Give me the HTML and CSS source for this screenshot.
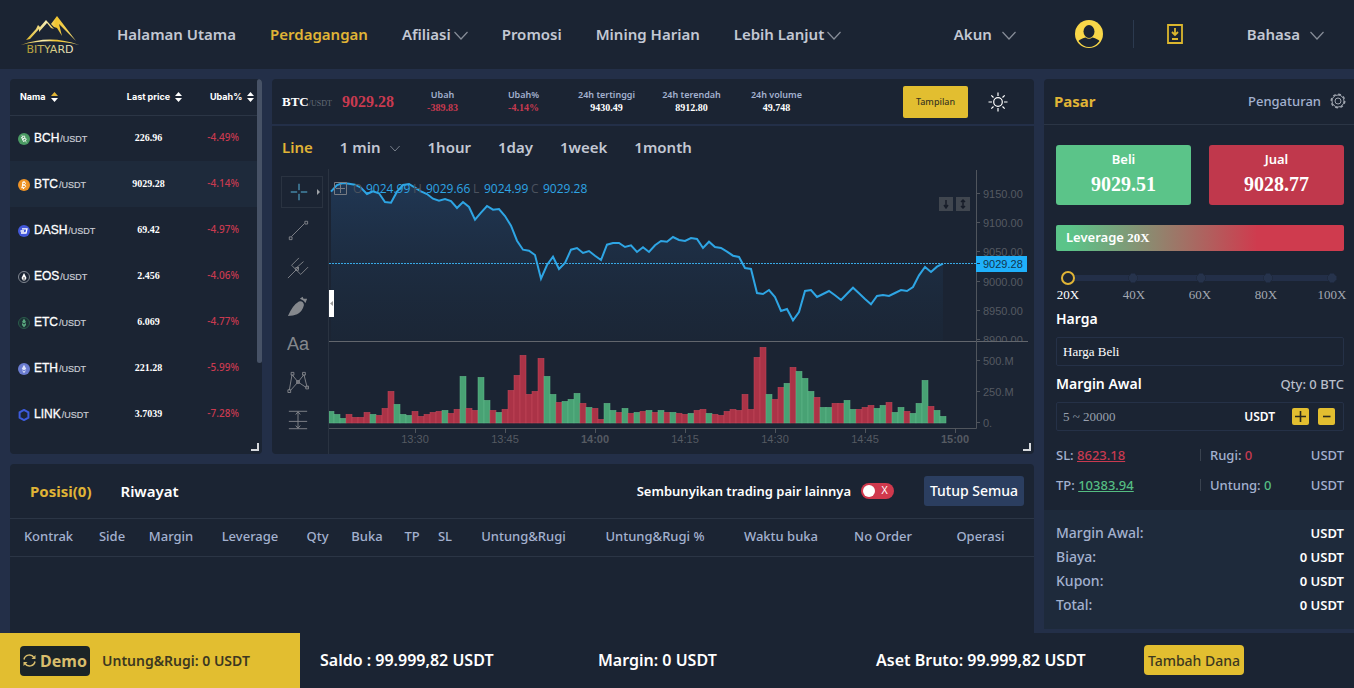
FILE: index.html
```html
<!DOCTYPE html>
<html lang="id">
<head>
<meta charset="utf-8">
<title>Bityard</title>
<link rel="stylesheet" href="styles.css">
</head>
<body>
<header class="topbar">
  <a class="logo" href="#" aria-label="Bityard">
    <svg width="60" height="40" viewBox="0 0 60 40">
      <defs>
        <linearGradient id="gold" x1="0" x2="1" y1="0" y2="0"><stop offset="0" stop-color="#e0b92a"/><stop offset=".4" stop-color="#f7ecb0"/><stop offset=".6" stop-color="#f0c42e"/><stop offset="1" stop-color="#f3dc7a"/></linearGradient>
        <linearGradient id="word" x1="0" x2="1" y1="0" y2="0"><stop offset="0" stop-color="#b39a2e"/><stop offset=".6" stop-color="#d9cf8a"/><stop offset="1" stop-color="#f3ecd0"/></linearGradient>
      </defs>
      <path fill="url(#gold)" d="M5 25 15 14 17 10 19 12 25 5 33 14 30 13 26 8 18 17 18 14 9 24ZM30 9 36 1 55 26 38 9 41 21 36 13 33 12Z"/>
      <path fill="url(#gold)" d="M0 30Q29 19 58 30 29 22.500 0 30Z"/>
      <text class="logo-word" x="29" y="38" text-anchor="middle" fill="url(#word)">BITYARD</text>
    </svg>
  </a>
  <nav class="nav">
    <a href="#">Halaman Utama</a>
    <a href="#" class="is-active">Perdagangan</a>
    <a href="#">Afiliasi<svg class="chev" viewBox="0 0 14 9"><path d="M.5 1 7 8 13.500 1"/></svg></a>
    <a href="#">Promosi</a>
    <a href="#">Mining Harian</a>
    <a href="#">Lebih Lanjut<svg class="chev" viewBox="0 0 14 9"><path d="M.5 1 7 8 13.500 1"/></svg></a>
  </nav>
  <div class="account">
    <a href="#" class="menu-link">Akun<svg class="chev" viewBox="0 0 14 9"><path d="M.5 1 7 8 13.500 1"/></svg></a>
    <a href="#" class="avatar" aria-label="Profil">
      <svg width="28" height="28" viewBox="0 0 28 28"><circle cx="14" cy="14" r="14" fill="#f9d749"/><ellipse cx="14" cy="11.500" rx="5.500" ry="6.500" fill="#1b2433"/><path fill="#1b2433" d="M3.500 21Q5 19 10.500 17.500 14 20 17.500 17.500 23 19 24.500 21 20 27 14 27 8 27 3.500 21Z"/></svg>
    </a>
    <a href="#" class="download" aria-label="Unduh">
      <svg width="16" height="20" viewBox="0 0 16 20" fill="none" stroke="#dcb72e" stroke-width="1.800"><path d="M1 1H15V19H1Z"/><path d="M8 4V10M5 8 8 11 11 8M5 15H11"/></svg>
    </a>
    <a href="#" class="menu-link">Bahasa<svg class="chev" viewBox="0 0 14 9"><path d="M.5 1 7 8 13.500 1"/></svg></a>
  </div>
</header>

<main class="main">
  <div class="left">
    <div class="upper">
      <section class="panel market">
        <table class="market-table">
          <thead><tr>
            <th class="c-name">Nama<svg class="sort" viewBox="0 0 7 10"><path class="on" d="M0 4H7L3.500 0Z"/><path d="M0 6H7L3.500 10Z"/></svg></th>
            <th class="c-price">Last price<svg class="sort" viewBox="0 0 7 10"><path d="M0 4H7L3.500 0ZM0 6H7L3.500 10Z"/></svg></th>
            <th class="c-change">Ubah%<svg class="sort" viewBox="0 0 7 10"><path d="M0 4H7L3.500 0ZM0 6H7L3.500 10Z"/></svg></th>
          </tr></thead>
          <tbody>
            <tr><td><svg class="coin" viewBox="0 0 12 12"><circle cx="6" cy="6" r="6" fill="#4a9a63"/><path d="M3.500 4 5.500 8.500M4 4.500Q7 1.500 6.800 4.500L5 6.200Q8.500 4 8 7L5.500 8.500M4 2.500l.5 1.200M7.800 8.300l.4 1" stroke="#fff" fill="none"/></svg><b>BCH</b><span>/USDT</span></td><td>226.96</td><td>-4.49%</td></tr>
            <tr class="is-selected"><td><svg class="coin" viewBox="0 0 12 12"><circle cx="6" cy="6" r="6" fill="#ee9326"/><path d="M5 3 4 9M4.500 3.200Q8 2.800 7.500 4.500T4.500 6Q8.200 5.800 7.700 7.500T3.500 8.800M6 2v1M5.500 9v1" stroke="#fff" fill="none"/></svg><b>BTC</b><span>/USDT</span></td><td>9029.28</td><td>-4.14%</td></tr>
            <tr><td><svg class="coin" viewBox="0 0 12 12"><circle cx="6" cy="6" r="6" fill="#4257d9"/><path d="M4 3.800H9L8 8H3M2.500 6H6" stroke="#fff" stroke-width="1.300" fill="none"/></svg><b>DASH</b><span>/USDT</span></td><td>69.42</td><td>-4.97%</td></tr>
            <tr><td><svg class="coin" viewBox="0 0 12 12"><circle cx="6" cy="6" r="5.500" fill="#1b2433" stroke="#9a9fa8" stroke-width=".8"/><path d="M6 2 3.500 7 5 9.500H7L8.500 7Z" fill="#fff"/><path d="M6 6V9.500" stroke="#444"/></svg><b>EOS</b><span>/USDT</span></td><td>2.456</td><td>-4.06%</td></tr>
            <tr><td><svg class="coin" viewBox="0 0 12 12"><circle cx="6" cy="6" r="5.500" fill="#1c3035" stroke="#2e6a50" stroke-width=".8"/><path d="M6 1.500 8 5 6 6.500 4 5ZM4 6 6 7.500 8 6V8L6 10.500 4 8Z" fill="#58a77e"/></svg><b>ETC</b><span>/USDT</span></td><td>6.069</td><td>-4.77%</td></tr>
            <tr><td><svg class="coin" viewBox="0 0 12 12"><circle cx="6" cy="6" r="6" fill="#6a7cd0"/><path d="M6 1.800 8.300 6 6 7.300 3.700 6ZM3.800 7 6 8.400 8.200 7 6 10.300Z" fill="#dfe4fa"/></svg><b>ETH</b><span>/USDT</span></td><td>221.28</td><td>-5.99%</td></tr>
            <tr><td><svg class="coin" viewBox="0 0 12 12"><path d="M6 .9 10.400 3.400V8.600L6 11.100 1.600 8.600V3.400Z" fill="none" stroke="#3d5bdc" stroke-width="2"/></svg><b>LINK</b><span>/USDT</span></td><td>3.7039</td><td>-7.28%</td></tr>
            <tr><td><svg class="coin" viewBox="0 0 12 12"><circle cx="6" cy="6" r="6" fill="#9a9fa8"/></svg></td><td></td><td></td></tr>
          </tbody>
        </table>
        <div class="scroll-thumb"></div>
        <div class="corner"></div>
      </section>

      <section class="panel chart">
        <div class="ticker">
          <div class="pair"><b>BTC</b><span>/USDT</span></div>
          <div class="last">9029.28</div>
          <dl class="stats">
            <div class="stat stat-wide"><dt>Ubah</dt><dd class="down">-389.83</dd></div>
            <div class="stat stat-wide"><dt>Ubah%</dt><dd class="down">-4.14%</dd></div>
            <div class="stat"><dt>24h tertinggi</dt><dd>9430.49</dd></div>
            <div class="stat"><dt>24h terendah</dt><dd>8912.80</dd></div>
            <div class="stat"><dt>24h volume</dt><dd>49.748</dd></div>
          </dl>
          <button class="view-btn">Tampilan</button>
          <button class="icon-btn" aria-label="Tema"><svg width="20" height="20" viewBox="0 0 20 20" fill="none" stroke="#fff" stroke-width="1.200"><circle cx="10" cy="10" r="4.300"/><path d="M10 .5V4M10 16V19.500M.5 10H4M16 10H19.500M3.300 3.300 5.500 5.500M14.500 14.500 16.700 16.700M3.300 16.700 5.500 14.500M14.500 5.500 16.700 3.300"/></svg></button>
        </div>
        <div class="intervals">
          <button class="is-active">Line</button>
          <button class="minute">1 min<svg class="chev chev-sm" viewBox="0 0 14 9"><path d="M.5 1 7 8 13.500 1"/></svg></button>
          <button>1hour</button><button>1day</button><button>1week</button><button>1month</button>
        </div>
        <div class="chart-body">
          <div class="tools">
            <button class="is-on" aria-label="Kursor"><svg viewBox="0 0 24 24"><path d="M3 12H10M14 12H21M12 3V10M12 14V21"/></svg><i></i></button>
            <button aria-label="Garis"><svg viewBox="0 0 24 24"><path d="M5 19 19 5M2.500 19.500h3v3h-3ZM19.500 2.500h3v3h-3Z"/></svg></button>
            <button aria-label="Garpu"><svg viewBox="0 0 24 24"><path d="M1 23 13 11M13 1 5 9 10 14 15 19 23 11M9.500 11.500h3v3h-3ZM10 12 18 5"/></svg></button>
            <button aria-label="Kuas"><svg viewBox="0 0 24 24"><path class="solid" d="M1 23Q6 11 13 7 18 6 18.500 11 17 18 11 21 7 22.500 1 23ZM14 4 17 2 18 4 22 4 20 9Q19 6 14 4Z"/></svg></button>
            <button aria-label="Teks" class="txt">Aa</button>
            <button aria-label="Pola"><svg viewBox="0 0 24 24"><path d="M2.500 21 5.500 4 12 12 18.500 4 22 18M4 21 12 12 21 18M1 20.500h3v3H1ZM4.500 1.500h3v3h-3ZM17 1.500h3v3h-3ZM10.500 10.500h3v3h-3ZM20.500 16.500h3v3h-3Z"/></svg></button>
            <button aria-label="Rentang"><svg viewBox="0 0 24 24"><path d="M2 2.500H22M2 13.500H22M2 21.500H22M12 3V21M9.500 6 12 3 14.500 6M9.500 18 12 21 14.500 18"/></svg></button>
          </div>
          <svg class="plot" id="plot" viewBox="0 0 700 282" role="img" aria-label="BTC/USDT">
            <defs><linearGradient id="fade" x1="0" x2="0" y1="0" y2="1"><stop offset="0" stop-color="#213a59" stop-opacity=".85"/><stop offset="1" stop-color="#1b2a3c" stop-opacity=".35"/></linearGradient></defs>
            <g id="ohlc" class="ohlc">
              <text x="24" y="24" class="dim">O</text><text x="37" y="24">9024.99</text>
              <text x="84" y="24" class="dim">H</text><text x="97" y="24">9029.66</text>
              <text x="144" y="24" class="dim">L</text><text x="155" y="24">9024.99</text>
              <text x="202" y="24" class="dim">C</text><text x="214" y="24">9029.28</text>
            </g>
            <path d="M5.500 13.500h12v12h-12ZM11.500 15v9M7 19.500h9" fill="none" stroke="#777b82"/>
            <g id="series"></g>
            <g class="axis">
              <path d="M0 172.500H699" class="divider"/>
              <path d="M0 259.500H647.500V1M86.500 260v4M176.500 260v4M266.500 260v4M356.500 260v4M446.500 260v4M536.500 260v4M626.500 260v4M648 24.500h3M648 53.500h3M648 82.500h3M648 112.500h3M648 141.500h3M648 170.500h3M648 191.500h3M648 222.500h3M648 253.500h3"/>
              <text x="654" y="29">9150.00</text><text x="654" y="58">9100.00</text><text x="654" y="87">9050.00</text><text x="654" y="117">9000.00</text><text x="654" y="146">8950.00</text><svg width="700" height="172"><text x="654" y="175">8900.00</text></svg>
              <text x="654" y="196">500.M</text><text x="654" y="227">250.M</text><text x="654" y="258">0.</text>
              <g text-anchor="middle"><text x="86" y="274">13:30</text><text x="176" y="274">13:45</text><text x="266" y="274" class="hr">14:00</text><text x="356" y="274">14:15</text><text x="446" y="274">14:30</text><text x="536" y="274">14:45</text><text x="626" y="274" class="hr">15:00</text></g>
            </g>
            <path d="M0 94.500H647" stroke="#38a9e6" stroke-dasharray="2 1"/>
            <path d="M647 87h51v16h-51Z" fill="#1fb0fb"/><path d="M648 94.500h3" stroke="#14324a"/><text x="654" y="99" class="tag">9029.28</text>
            <path d="M610 28h14v14h-14ZM627 28h14v14h-14Z" fill="#40464f"/><path d="M617 31v7M615 36l2 3 2-3M634 31v8M632 33l2-2 2 2M632 37l2 2 2-2" fill="none" stroke="#171d29" stroke-width="1.500"/>
            <path d="M0 121h5v27H0Z" fill="#fff"/><path d="M4 132v5l-3-2.500Z" fill="#999"/>
          </svg>
        </div>
        <div class="corner"></div>
      </section>
    </div>

    <section class="panel positions">
      <div class="pos-head">
        <button class="tab is-active">Posisi(0)</button>
        <button class="tab">Riwayat</button>
        <label class="hide-pairs"><span>Sembunyikan trading pair lainnya</span><input type="checkbox" class="switch"></label>
        <button class="close-all">Tutup Semua</button>
      </div>
      <table class="pos-table">
        <colgroup><col class="w77"><col class="w50"><col class="w68"><col class="w90"><col class="w45"><col class="w54"><col class="w36"><col class="w30"><col class="w127"><col class="w136"><col class="w116"><col class="w88"><col class="w107"></colgroup>
        <thead><tr><th>Kontrak</th><th>Side</th><th>Margin</th><th>Leverage</th><th>Qty</th><th>Buka</th><th>TP</th><th>SL</th><th>Untung&amp;Rugi</th><th>Untung&amp;Rugi %</th><th>Waktu buka</th><th>No Order</th><th>Operasi</th></tr></thead>
      </table>
    </section>
  </div>

  <aside class="order">
    <div class="order-head"><h2>Pasar</h2><a href="#">Pengaturan<svg width="16" height="16" viewBox="0 0 16 16" fill="none" stroke="#a0a6b0"><circle cx="8" cy="8" r="6.800" stroke-width="1.400" stroke-dasharray="2.800 2.540"/><circle cx="8" cy="8" r="6"/><circle cx="8" cy="8" r="3"/></svg></a></div>
    <form class="order-body">
      <div class="sides">
        <button type="button" class="side buy"><span>Beli</span><b>9029.51</b></button>
        <button type="button" class="side sell"><span>Jual</span><b>9028.77</b></button>
      </div>
      <div class="leverage">Leverage <b>20X</b></div>
      <input class="slider" type="range" min="20" max="100" step="20" value="20" aria-label="Leverage">
      <div class="ticks"><span class="is-on">20X</span><span>40X</span><span>60X</span><span>80X</span><span>100X</span></div>
      <label class="field-label" for="price">Harga</label>
      <input class="field" id="price" type="text" value="Harga Beli">
      <div class="label-row"><label class="field-label" for="margin">Margin Awal</label><span>Qty: 0 BTC</span></div>
      <div class="field-wrap">
        <input id="margin" type="text" placeholder="5 ~ 20000">
        <b>USDT</b>
        <button type="button" aria-label="Tambah"><svg width="17" height="17" viewBox="0 0 17 17"><path d="M3 8.500H14M8.500 3V14"/></svg></button>
        <button type="button" aria-label="Kurang"><svg width="17" height="17" viewBox="0 0 17 17"><path d="M5 8.500H12.500"/></svg></button>
      </div>
      <div class="limit"><span>SL: <a href="#" class="down">8623.18</a></span><span class="mid">Rugi: <em class="down">0</em></span><span>USDT</span></div>
      <div class="limit"><span>TP: <a href="#" class="up">10383.94</a></span><span class="mid">Untung: <em class="up">0</em></span><span>USDT</span></div>
    </form>
    <dl class="summary">
      <div><dt>Margin Awal:</dt><dd>USDT</dd></div>
      <div><dt>Biaya:</dt><dd>0 USDT</dd></div>
      <div><dt>Kupon:</dt><dd>0 USDT</dd></div>
      <div><dt>Total:</dt><dd>0 USDT</dd></div>
    </dl>
  </aside>
</main>

<footer class="bottombar">
  <div class="demo">
    <button class="demo-btn"><svg width="13" height="13" viewBox="0 0 13 13" fill="none" stroke="#d8bd6c" stroke-width="1.500"><path d="M1 5.500A5.500 5.500 0 0 1 11 3.500M12 7.500A5.500 5.500 0 0 1 2 9.500"/><path d="M12.500 1V5H8.500ZM.5 12V8H4.500Z" fill="#d8bd6c" stroke="none"/></svg>Demo</button>
    <span>Untung&amp;Rugi: 0 USDT</span>
  </div>
  <div class="totals">
    <span>Saldo : 99.999,82 USDT</span><span>Margin: 0 USDT</span><span>Aset Bruto: 99.999,82 USDT</span>
    <div><button class="add-btn">Tambah Dana</button></div>
  </div>
</footer>
<script src="chart.js"></script>
</body>
</html>
```
FILE: styles.css
```css
* { box-sizing: border-box; }
body { margin: 0; height: 100vh; display: flex; flex-direction: column; overflow: hidden; background: #232f48; color: #fff; font-family: "Noto Sans", sans-serif; font-size: 13px; font-weight: 500; }
a { color: inherit; text-decoration: none; }
button { font: inherit; color: inherit; background: none; border: 0; padding: 0; cursor: pointer; }
h2, dl, dd { margin: 0; }
.down { color: #c93a50; }
.up { color: #55bd82; }

.topbar { flex: none; height: 69px; display: flex; align-items: center; background: #1b2433; color: #c3c8d3; font-size: 15px; font-weight: 600; padding: 0 30px 2px 0; }
.logo { width: 117px; padding: 3px 0 0 21px; }
.logo svg { display: block; }
.logo-word { font: 400 11px "DejaVu Sans", sans-serif; }
.nav { display: flex; gap: 34px; }
.nav a.is-active { color: #e0b436; }
.chev { width: 14px; height: 9px; margin-left: 3px; fill: none; stroke: #878d98; stroke-width: 1.2; }
.account { display: flex; align-items: center; margin-left: auto; }
.menu-link .chev { margin-left: 10px; }
.avatar { padding: 0 30px 0 59px; border-right: 1px solid #2c3a4f; }
.avatar svg, .download svg { display: block; }
.download { margin: 0 64px 0 33px; }

.main { flex: 1; min-height: 0; display: flex; gap: 10px; padding: 10px 0 0 10px; align-items: flex-start; }
.left { flex: 1; min-width: 0; height: 100%; display: flex; flex-direction: column; gap: 10px; }
.upper { display: flex; gap: 10px; height: 375px; }
.panel { position: relative; background: #1b2433; border-radius: 4px; overflow: hidden; }
.corner { position: absolute; right: 3px; bottom: 3px; width: 8px; height: 8px; border: solid #d6d9dd; border-width: 0 2px 2px 0; }

.market { width: 252px; padding-right: 5px; }
.market-table { width: 100%; border-collapse: collapse; table-layout: fixed; }
.market-table th { height: 36px; padding: 0; font: 700 9px Inter, sans-serif; border-bottom: 1px solid #2b3545; }
.market-table td { height: 46px; padding: 0 0 2px; }
.c-name { width: 42%; text-align: left; }
.market-table th.c-name { padding-left: 10px; }
.market-table th.c-change { padding-left: 12px; }
.c-price { width: 33%; }
.sort { width: 7px; height: 10px; margin-left: 5px; vertical-align: -2px; fill: #fff; }
.sort .on { fill: #e0b436; }
.coin { width: 12px; height: 12px; margin: 0 4px 0 8px; vertical-align: -3px; }
.market-table b { font: 400 12px "Liberation Sans", sans-serif; -webkit-text-stroke: 0.3px #fff; }
.market-table td span { margin-left: 1px; font: 400 9px "Liberation Sans", sans-serif; color: #c9ccd3; -webkit-text-stroke: 0.2px #c9ccd3; }
.market-table td:nth-child(2) { font: 700 10px "Liberation Serif", serif; text-align: center; padding-right: 12px; }
.market-table td:nth-child(3) { font-size: 10px; color: #c93a50; text-align: center; padding-right: 6px; }
.is-selected { background: #1e2a3b; }
.scroll-thumb { position: absolute; right: 0; top: 0; width: 5px; height: 284px; border-radius: 3px; background: #475266; }

.chart { flex: 1; min-width: 0; display: flex; flex-direction: column; }
.ticker { height: 47px; display: flex; align-items: center; padding: 0 26px 0 10px; border-bottom: 2px solid #232f48; }
.pair { font-family: "Liberation Serif", serif; width: 60px; white-space: nowrap; }
.pair b { font-size: 13px; }
.pair span { font-size: 8px; color: #656c78; }
.last { font: 700 16px "Liberation Serif", serif; color: #c93a50; width: 60px; }
.stats { display: flex; flex: 1; }
.stat { text-align: center; width: 85px; line-height: 13px; }
.stat-wide { width: 81px; }
.stat dt { font-size: 9px; font-weight: 600; color: #a3b1cf; }
.stat dd { font: 700 10px/14px "Liberation Serif", serif; }
.view-btn { width: 65px; height: 32px; border-radius: 2px; background: #e2be30; color: #3c3820; font-size: 9px; }
.icon-btn { margin-left: 20px; }
.icon-btn svg { display: block; }
.intervals { height: 43px; display: flex; align-items: center; gap: 27px; padding: 0 10px 2px; font-size: 15px; font-weight: 600; color: #c3c8d3; }
.intervals .is-active { color: #e0b436; }
.chev-sm { width: 10px; height: 7px; margin-left: 10px; vertical-align: 1px; }
.minute { white-space: nowrap; }
.chart-body { flex: 1; display: flex; min-height: 0; }
.tools { flex: none; width: 57px; padding: 7px 0 0 9px; border-right: 1px solid #2a3341; display: flex; flex-direction: column; gap: 6px; }
.tools button { position: relative; width: 42px; height: 32px; padding-left: 6px; text-align: left; color: #85888d; }
.tools svg { display: block; width: 22px; height: 22px; fill: none; stroke: #85888d; }
.tools .solid { fill: #85888d; stroke: none; }
.tools .is-on { border: 1px solid #2a3341; }
.tools .is-on svg { stroke: #5fc3ee; }
.tools .is-on i { position: absolute; right: 2px; top: 12px; border: solid transparent; border-width: 3px 0 3px 3px; border-left-color: #a0a3a8; }
.tools .txt { font: 400 18px "Liberation Sans", sans-serif; }
.plot { flex: 1; min-width: 0; align-self: flex-start; margin-right: 5px; }
.ohlc text { font: 500 12px "Open Sans", sans-serif; fill: #2ea5e4; }
.ohlc .dim { fill: #4b525e; }
.axis path { fill: none; stroke: #50555d; }
.axis .divider { stroke: #62666d; }
.axis text { font: 11px "Liberation Sans", sans-serif; fill: #555a62; }
.axis .hr { font-weight: 700; }
.tag { font: 11px "Liberation Sans", sans-serif; fill: #12354e; }
.price-line { fill: none; stroke: #2ea5e4; stroke-width: 2; }
.price-area { fill: url(#fade); }
.bar-g { fill: #48a274; stroke: #62b98b; stroke-width: .5; }
.bar-r { fill: #ab3347; stroke: #c7485b; stroke-width: .5; }

.positions { flex: 1; min-height: 0; border-radius: 4px 4px 0 0; }
.pos-head { height: 55px; display: flex; align-items: center; padding: 0 10px 1px 20px; font-size: 14px; border-bottom: 1px solid #2b3545; }
.tab { margin-right: 29px; font-size: 15px; font-weight: 600; }
.tab.is-active { color: #e0b436; font-weight: 700; }
.hide-pairs { display: flex; align-items: center; gap: 10px; margin: 0 30px 0 auto; font-size: 13px; font-weight: 600; }
.switch { appearance: none; position: relative; margin: 0; width: 33px; height: 16px; border-radius: 8px; background: #d0394d; }
.switch::before { content: ""; position: absolute; left: 2px; top: 2px; width: 12px; height: 12px; border-radius: 50%; background: #fff; }
.switch::after { content: "X"; position: absolute; right: 6px; top: 2px; font-size: 10px; font-weight: 400; line-height: 12px; color: #fff; }
.close-all { width: 100px; height: 30px; border-radius: 3px; background: #2b3e60; }
.pos-table { width: 100%; table-layout: fixed; border-collapse: collapse; }
.pos-table th { height: 37px; padding: 0 0 2px; font-size: 13px; font-weight: 500; color: #a3b1cf; border-bottom: 1px solid #2b3545; white-space: nowrap; }
.w77 { width: 77px; } .w50 { width: 50px; } .w68 { width: 68px; } .w90 { width: 90px; } .w45 { width: 45px; } .w54 { width: 54px; } .w36 { width: 36px; } .w30 { width: 30px; } .w127 { width: 127px; } .w136 { width: 136px; } .w116 { width: 116px; } .w88 { width: 88px; } .w107 { width: 107px; }

.order { flex: none; width: 310px; background: #1b2433; border-radius: 4px 0 0 0; color: #a3b1cf; }
.order-head { height: 46px; display: flex; justify-content: space-between; align-items: center; padding: 0 8px 1px 10px; border-bottom: 1px solid #2b3545; }
.order-head h2 { font-size: 15px; font-weight: 700; color: #e0b436; }
.order-head a { display: flex; align-items: center; gap: 9px; }
.order-body { padding: 20px 10px 10px 12px; display: flex; flex-direction: column; }
.sides { display: grid; grid-template-columns: 1fr 1fr; gap: 18px; }
.side { height: 60px; border-radius: 3px; color: #fff; display: flex; flex-direction: column; align-items: center; justify-content: center; }
.side span { line-height: 18px; font-weight: 600; }
.side b { font: 700 20px/32px "Liberation Serif", serif; }
.buy { background: #5bc489; }
.sell { background: #c0384c; }
.leverage { margin-top: 20px; height: 26px; border-radius: 2px; padding-left: 10px; line-height: 24px; color: #fff; font-weight: 600; background: linear-gradient(90deg, #5bc489 5%, #cf3b4e 70%); }
.leverage b { font-family: "Liberation Serif", serif; }
.slider { appearance: none; margin: 20px 4px 0 5px; height: 14px; border-radius: 7px;
  background:
    radial-gradient(circle closest-side, #26334c 80%, #1f2a3f 85% 95%, transparent) 25% 50% / 10px 10px no-repeat,
    radial-gradient(circle closest-side, #26334c 80%, #1f2a3f 85% 95%, transparent) 50% 50% / 10px 10px no-repeat,
    radial-gradient(circle closest-side, #26334c 80%, #1f2a3f 85% 95%, transparent) 75% 50% / 10px 10px no-repeat,
    radial-gradient(circle closest-side, #26334c 80%, #1f2a3f 85% 95%, transparent) 99% 50% / 10px 10px no-repeat,
    linear-gradient(#232f48, #232f48) left / 98% 6px no-repeat; }
.slider::-webkit-slider-thumb { appearance: none; width: 14px; height: 14px; border-radius: 50%; border: 2px solid #e0b436; background: #1b2433; }
.ticks { display: flex; justify-content: space-between; margin: 2px -3px 0; font: 400 13px/16px "Liberation Serif", serif; color: #a3a8b2; }
.ticks span { width: 30px; text-align: center; }
.ticks .is-on { color: #fff; }
.field-label { line-height: 20px; font-size: 14px; font-weight: 600; color: #fff; }
.order-body > .field-label { margin-top: 6px; }
.field, .field-wrap { height: 29px; border: 1px solid #253147; border-radius: 2px; background: none; color: #fff; }
.field, .field-wrap input { font: 400 13px "Liberation Serif", serif; padding: 0 6px; }
.field { margin-top: 8px; }
.label-row { display: flex; justify-content: space-between; align-items: center; margin-top: 8px; color: #b9bec9; }
.field-wrap { margin-top: 8px; display: flex; align-items: center; padding-right: 8px; }
.field-wrap input { flex: 1; min-width: 0; border: 0; background: none; color: #fff; }
.field-wrap input::placeholder { color: #98a0ae; }
.field-wrap b { font-size: 12px; font-weight: 600; margin-right: 8px; }
.field-wrap button { margin-left: 9px; border-radius: 2px; background: #e2be30; }
.field-wrap button svg { display: block; stroke: #2b2a1c; stroke-width: 1.6; }
.limit { display: grid; grid-template-columns: 144px 1fr auto; align-items: center; height: 30px; }
.field-wrap + .limit { margin-top: 9px; }
.limit a { text-decoration: underline; }
.limit em { font-style: normal; }
.mid { border-left: 1px solid #39424f; padding-left: 9px; line-height: 12px; }
.summary { background: #1e2a3b; padding: 11px 10px 12px 12px; }
.summary div { display: flex; justify-content: space-between; line-height: 24px; }
.summary dt { font-size: 14px; }
.summary dd { color: #fff; font-weight: 600; }

.bottombar { flex: none; height: 55px; display: flex; background: #1b2433; font-size: 16px; font-weight: 600; }
.demo { width: 300px; display: flex; align-items: center; gap: 12px; padding-left: 20px; background: #e2be30; color: #3c3820; font-size: 14px; }
.demo-btn { width: 70px; height: 30px; display: flex; align-items: center; justify-content: center; gap: 4px; border-radius: 4px; background: #1b2427; color: #d8bd6c; font-size: 16px; font-weight: 700; }
.totals { flex: 1; display: grid; grid-template-columns: 278fr 278fr 268fr 210fr; align-items: center; padding: 0 0 1px 20px; white-space: nowrap; }
.add-btn { width: 100px; height: 30px; border-radius: 4px; background: #e2be30; color: #3c3820; font-size: 14px; font-weight: 500; }
```
FILE: chart.js
```js
// One sample per minute, in thirds of a chart unit, measured from the top of the plot.
const price = [68,48,42,44,47,56,75,67,73,99,101,68,48,45,56,67,75,89,95,90,96,117,99,114,152,131,111,122,120,141,170,215,242,245,258,329,288,263,300,282,242,237,252,246,260,273,227,222,222,234,229,249,235,249,229,216,218,204,213,216,207,210,237,218,234,237,248,260,264,297,300,372,375,363,384,426,420,454,429,366,363,384,375,366,379,393,374,356,373,390,406,381,378,381,372,363,366,354,319,294,309,293,284];
const volume = "35g26g14g26r17r17r32r26g23r44r95r56g26g23g35r20r26r32r35r38g29r41r140g44r38r137g68g38r32g41r98r143r203r86r95r194r140g86g62r65g71g89g59r47g44r11r59g38g32r44g29r32g35r38g32r38g32r32g29r26r29g38r41r29g26r23r35r41r38r86r41r197r227r86g71r107r119g167r155g134g95g77r47g47g59r59r68g41g41r47r53r44g53g62r32g47g35r29g59g128g50r38g20g".match(/\d+[gr]/g);

const NS = "http://www.w3.org/2000/svg";
const series = document.getElementById("series");
function add(name, attrs) {
  const el = document.createElementNS(NS, name);
  for (const key in attrs) el.setAttribute(key, attrs[key]);
  series.append(el);
}
const points = price.map((v, i) => `${2 + i * 6},${(v / 3).toFixed(1)}`);
add("path", { class: "price-area", d: `M2,172L${points.join("L")}L614,172Z` });
add("polyline", { class: "price-line", points: points.join(" ") });
volume.forEach((v, i) => {
  const h = parseInt(v, 10) / 3;
  const x = Math.max(0, i * 6 - 1);
  add("rect", { class: "bar-" + v.slice(-1), x, y: 254 - h, width: i ? 6 : 5, height: h });
});
series.parentNode.insertBefore(series, document.getElementById("ohlc"));
```
